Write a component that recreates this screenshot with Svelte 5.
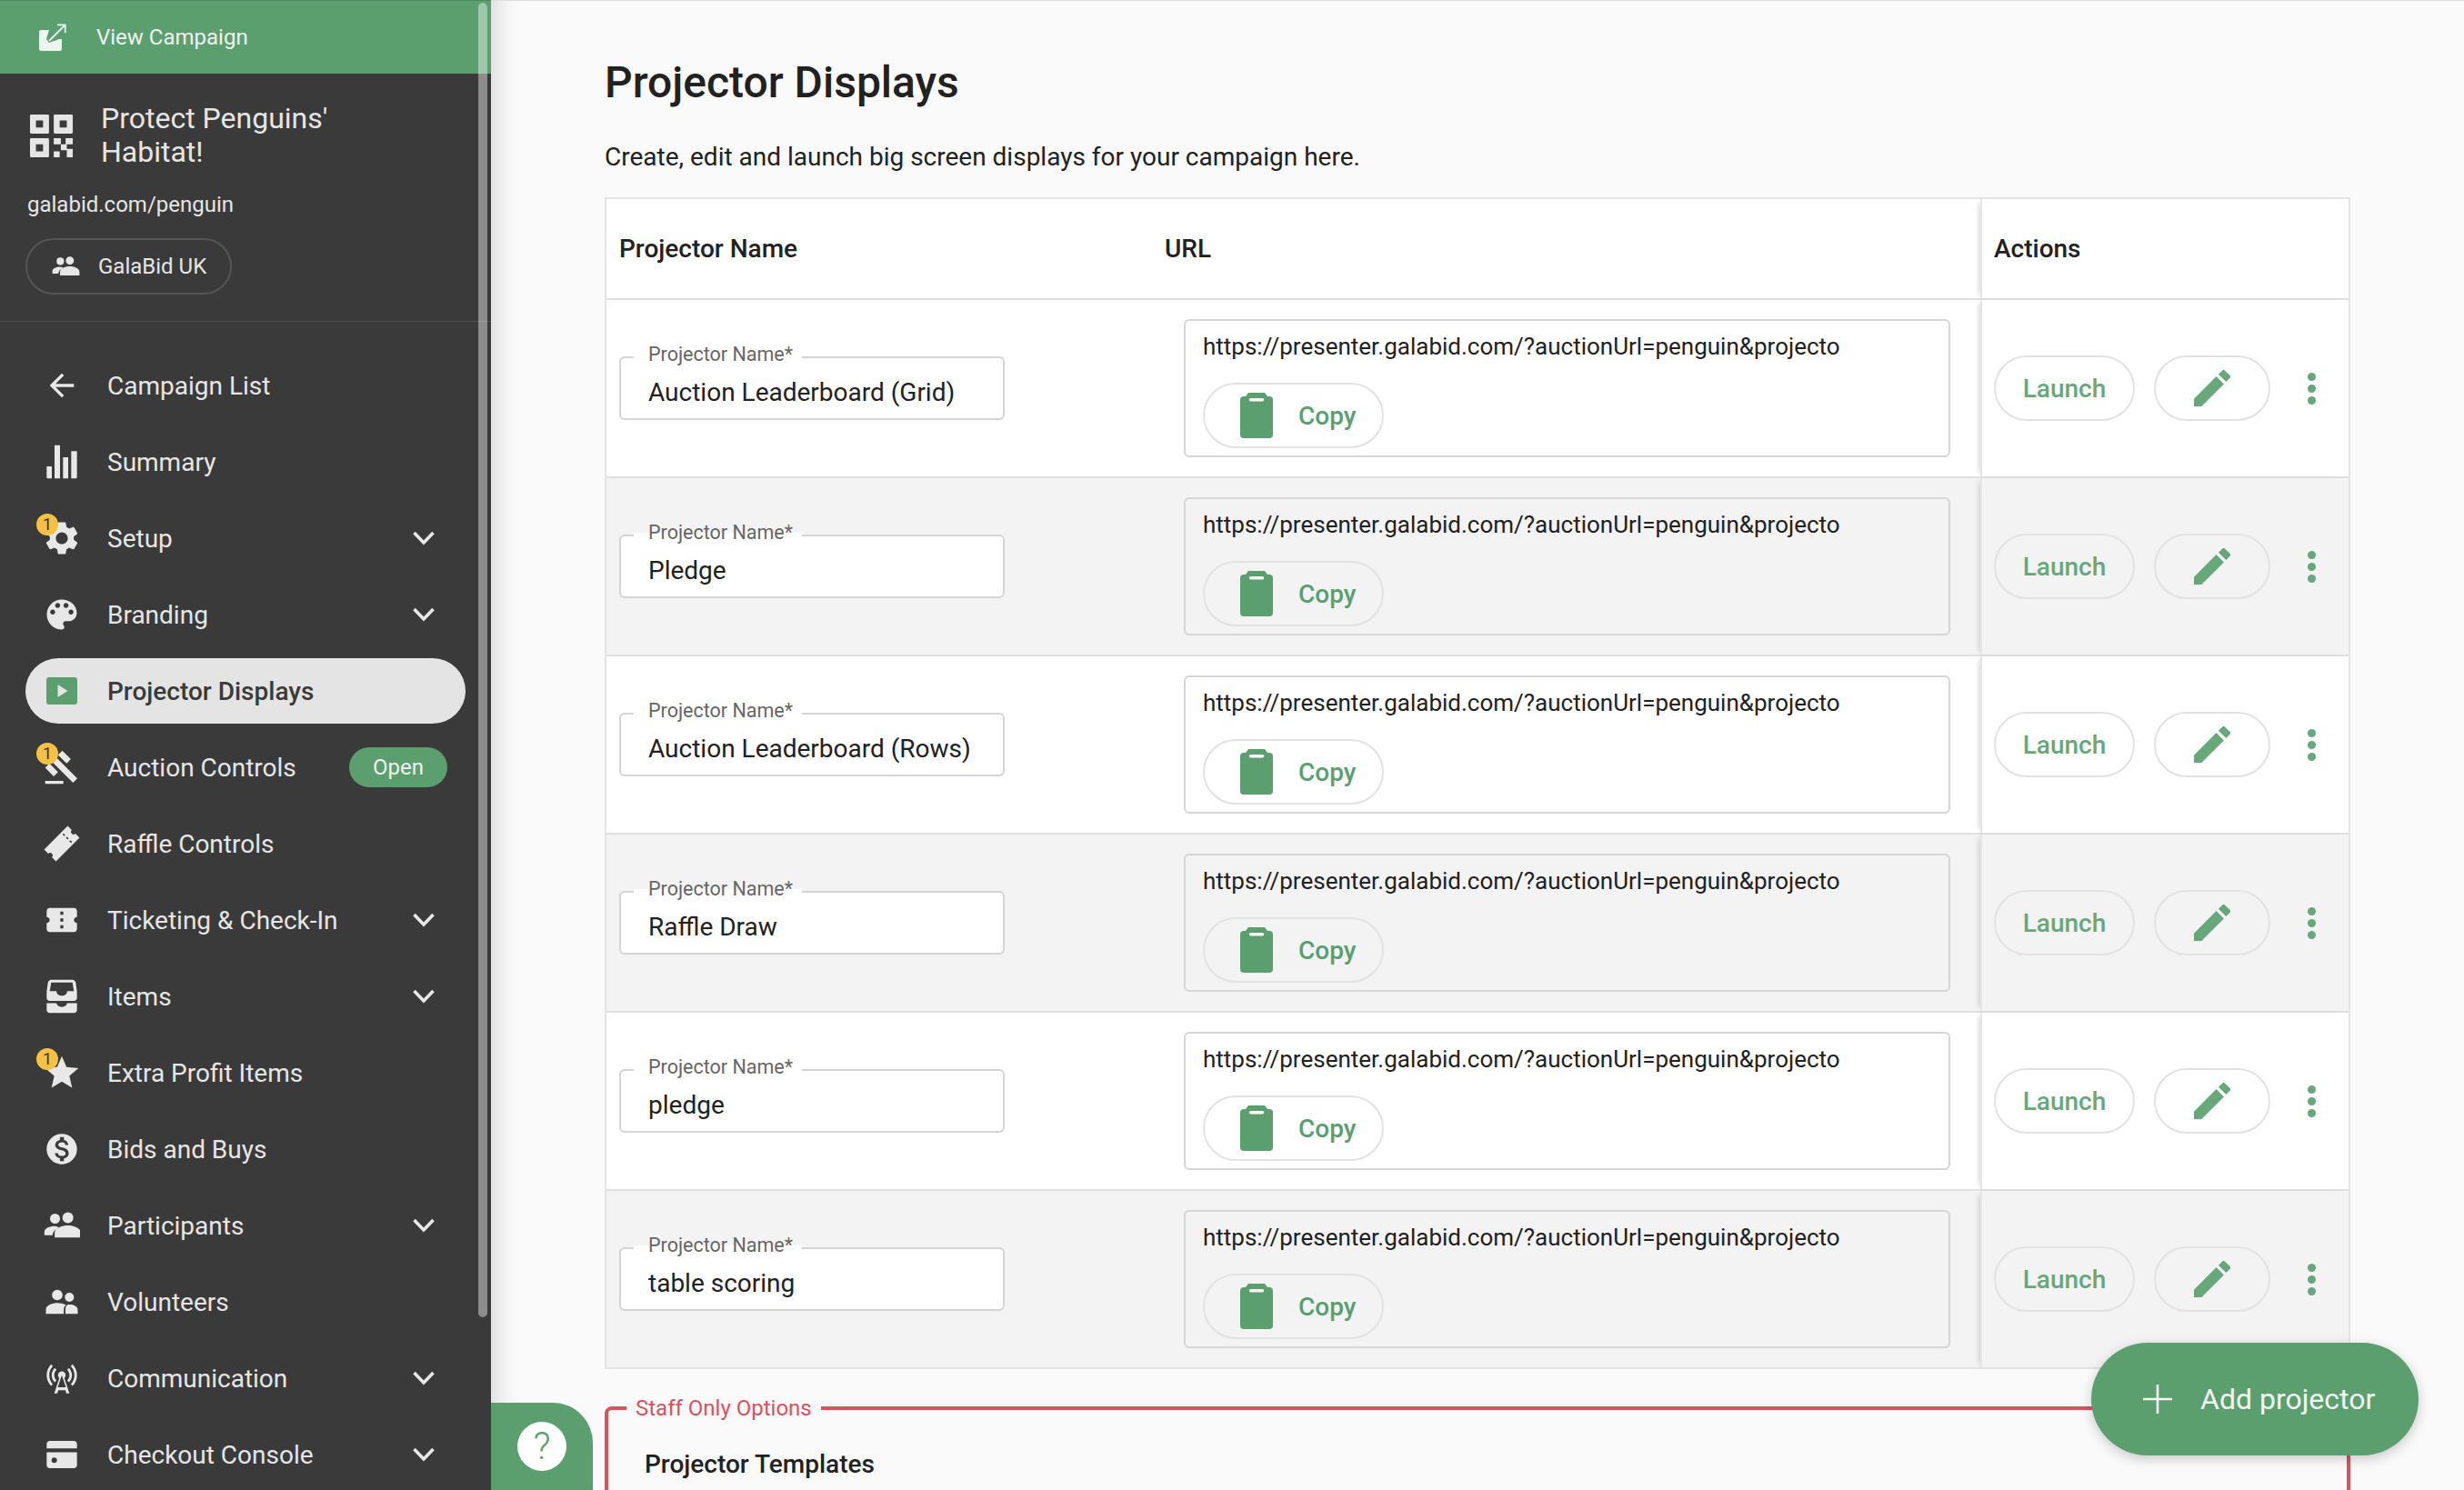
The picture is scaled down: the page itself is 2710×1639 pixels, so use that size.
<script>
  const ICONS = {
    back: 'M20 11H7.83l5.59-5.59L12 4l-8 8 8 8 1.41-1.41L7.83 13H20v-2z',
    summary: 'M2 15h3.400v8H3a1 1 0 0 1-1-1zM7.200 1h3.600v22H7.200zM12.800 9h3.400v14h-3.400zM18.200 5H22v17a1 1 0 0 1-1 1h-2.800z',
    gear: 'M19.14 12.94c.04-.3.06-.61.06-.94 0-.32-.02-.64-.07-.94l2.03-1.58c.18-.14.23-.41.12-.61l-1.92-3.32c-.12-.22-.37-.29-.59-.22l-2.39.96c-.5-.38-1.03-.7-1.62-.94l-.36-2.54c-.04-.24-.24-.41-.48-.41h-3.84c-.24 0-.43.17-.47.41l-.36 2.54c-.59.24-1.13.57-1.62.94l-2.39-.96c-.22-.08-.47 0-.59.22L2.74 8.87c-.12.21-.08.47.12.61l2.03 1.58c-.05.3-.09.63-.09.94s.02.64.07.94l-2.03 1.58c-.18.14-.23.41-.12.61l1.92 3.32c.12.22.37.29.59.22l2.39-.96c.5.38 1.03.7 1.62.94l.36 2.54c.05.24.24.41.48.41h3.84c.24 0 .44-.17.47-.41l.36-2.54c.59-.24 1.13-.56 1.62-.94l2.39.96c.22.08.47 0 .59-.22l1.92-3.32c.12-.22.07-.47-.12-.61l-2.01-1.58zM12 15.6c-1.98 0-3.6-1.62-3.6-3.6s1.62-3.6 3.6-3.6 3.6 1.62 3.6 3.6-1.62 3.6-3.6 3.6z',
    palette: 'M12 3c-4.97 0-9 4.03-9 9s4.03 9 9 9c.83 0 1.5-.67 1.5-1.5 0-.39-.15-.74-.39-1.01-.23-.26-.38-.61-.38-.99 0-.83.67-1.5 1.5-1.5H16c2.76 0 5-2.24 5-5 0-4.42-4.03-8-9-8zm-5.5 9c-.83 0-1.5-.67-1.5-1.5S5.67 9 6.5 9 8 9.67 8 10.5 7.33 12 6.500 12zm3-4C8.67 8 8 7.33 8 6.5S8.67 5 9.500 5s1.500.67 1.500 1.500S10.330 8 9.500 8zm5 0c-.83 0-1.500-.67-1.500-1.500S13.670 5 14.500 5s1.500.67 1.500 1.500S15.330 8 14.500 8zm3 4c-.83 0-1.500-.67-1.500-1.500S16.670 9 17.500 9s1.500.67 1.500 1.500-.67 1.500-1.500 1.500z',
    gavel: 'M1 21h12v2H1zM5.245 8.07l2.83-2.827 14.14 14.142-2.828 2.828zM12.317 1l5.657 5.656-2.83 2.83-5.654-5.66zM3.825 9.485l5.657 5.657-2.828 2.828-5.657-5.657z',
    raffle: 'M1 6.500h22v3.800a1.700 1.700 0 0 0 0 3.400v3.800H1v-3.800a1.700 1.700 0 0 0 0-3.400zM16.600 8v1.600h1V8zM16.600 11.200v1.600h1v-1.600zM16.600 14.400V16h1v-1.600z',
    ticket: 'M22 10V6c0-1.11-.9-2-2-2H4c-1.1 0-1.99.89-1.99 2v4c1.1 0 1.99.9 1.99 2s-.89 2-2 2v4c0 1.1.9 2 2 2h16c1.1 0 2-.9 2-2v-4c-1.1 0-2-.9-2-2s.9-2 2-2zm-9 7.5h-2v-2h2v2zm0-4.500h-2v-2h2v2zm0-4.500h-2v-2h2v2z',
    tray: 'M5 1h14c1 0 2 .8 2.200 2L22 9v4c0 1.100-.9 2-2 2H4c-1.100 0-2-.9-2-2V9l.8-6C3 1.800 4 1 5 1zm0 1.800L4 8.500h4.500c0 2 1.500 3 3.500 3s3.500-1 3.500-3H20l-1-5.700zM2 16.500h6.500c.3 1.500 1.700 2.500 3.500 2.500s3.200-1 3.500-2.500H22V21c0 1.100-.9 2-2 2H4c-1.100 0-2-.9-2-2z',
    star: 'M12 17.27L18.18 21l-1.64-7.03L22 9.24l-7.19-.61L12 2 9.19 8.63 2 9.24l5.46 4.73L5.82 21z',
    dollar: 'M12 2C6.48 2 2 6.48 2 12s4.48 10 10 10 10-4.48 10-10S17.52 2 12 2zm1.41 16.09V20h-2.67v-1.93c-1.71-.36-3.16-1.46-3.27-3.4h1.96c.1 1.05.82 1.87 2.65 1.87 1.96 0 2.4-.98 2.4-1.59 0-.83-.44-1.61-2.67-2.14-2.48-.6-4.18-1.62-4.18-3.67 0-1.72 1.39-2.84 3.11-3.21V4h2.67v1.95c1.86.45 2.79 1.86 2.85 3.39H14.300c-.05-1.11-.64-1.87-2.22-1.87-1.500 0-2.400.68-2.400 1.640 0 .84.65 1.390 2.670 1.910s4.180 1.390 4.180 3.910c-.01 1.830-1.380 2.830-3.120 3.160z',
    people: 'M16 10.500a3.600 3.600 0 1 0 0-7.200 3.600 3.600 0 0 0 0 7.200zM7.500 10.800a3.300 3.300 0 1 0 0-6.600 3.300 3.300 0 0 0 0 6.600zM7 12.500c-2.600 0-6.500 1.300-6.500 3.800V18.500h5.300c.2-2.400 1.700-4 4.400-5.200-1.100-.5-2.200-.8-3.200-.8zM16 12c-3.400 0-8.700 1.600-8.700 4.600V20h17.200v-3.400C24.500 13.600 19.400 12 16 12z',
    volunteers: 'M9 11a3.500 3.500 0 1 0 0-7 3.500 3.500 0 0 0 0 7zM17 12a3 3 0 1 0 0-6 3 3 0 0 0 0 6zM9 12.800c-2.900 0-7.500 1.400-7.500 4.200V20h11.800v-3c0-1.200.6-2.200 1.400-3-1.900-.8-4-1.200-5.700-1.200zM17.500 13.800c-.7 0-1.500.1-2.100.3-.7.700-1 1.800-1 2.900v3h8.100v-2.700c0-2.400-3-3.500-5-3.500z',
    tower: 'M7.3 14.7l1.2-1.200c-1-1-1.500-2.300-1.500-3.500s.5-2.500 1.500-3.500L7.300 5.300C6 6.600 5.300 8.300 5.300 10s.7 3.400 2 4.700zM19.100 2.900l-1.200 1.200c1.600 1.600 2.400 3.800 2.400 5.900 0 2.100-.8 4.300-2.400 5.900l1.200 1.200c2-2 2.900-4.500 2.900-7.100 0-2.600-1-5.100-2.900-7.100zM6.100 4.100 4.900 2.900C3 4.900 2 7.400 2 10s1 5.100 2.900 7.100l1.200-1.200c-1.600-1.600-2.400-3.800-2.400-5.900 0-2.100.8-4.300 2.400-5.900zm10.600 10.600c1.300-1.300 2-3 2-4.700-.1-1.700-.7-3.400-2-4.700l-1.200 1.200c1 1 1.500 2.300 1.500 3.500s-.5 2.500-1.500 3.500l1.200 1.200zM14.500 10c0-1.380-1.120-2.500-2.500-2.500S9.500 8.620 9.500 10c0 .76.34 1.420.87 1.880L7 22h2l.67-2h4.670l.66 2h2l-3.370-10.120c.53-.46.87-1.120.87-1.880zm-5.170 8L12 10l2.670 8H9.330z',
    card: 'M4 3h16c1.100 0 2 .9 2 2v3H2V5c0-1.100.9-2 2-2zM2 10.500h20V19c0 1.100-.9 2-2 2H4c-1.100 0-2-.9-2-2zM7 14a1.800 1.800 0 1 0 0 3.600A1.800 1.800 0 0 0 7 14z'
  };

  const nav = [
    { label: 'Campaign List', icon: 'back' },
    { label: 'Summary', icon: 'summary' },
    { label: 'Setup', icon: 'gear', badge: true, more: true, big: true },
    { label: 'Branding', icon: 'palette', more: true, big: true },
    { label: 'Projector Displays', icon: 'play', active: true },
    { label: 'Auction Controls', icon: 'gavel', badge: true, chip: 'Open' },
    { label: 'Raffle Controls', icon: 'raffle', tilt: true },
    { label: 'Ticketing & Check-In', icon: 'ticket', more: true },
    { label: 'Items', icon: 'tray', more: true },
    { label: 'Extra Profit Items', icon: 'star', badge: true, big: true },
    { label: 'Bids and Buys', icon: 'dollar' },
    { label: 'Participants', icon: 'people', more: true },
    { label: 'Volunteers', icon: 'volunteers' },
    { label: 'Communication', icon: 'tower', more: true },
    { label: 'Checkout Console', icon: 'card', more: true }
  ];

  const projectors = [
    'Auction Leaderboard (Grid)',
    'Pledge',
    'Auction Leaderboard (Rows)',
    'Raffle Draw',
    'pledge',
    'table scoring'
  ];

  const url = 'https://presenter.galabid.com/?auctionUrl=penguin&projecto';
</script>

<div class="page">
  <aside class="sidebar">
    <div class="view">
      <svg class="view-icon" viewBox="0 0 30 30">
        <rect y="7" width="25" height="23" rx="2" fill="#eef5f0"/>
        <path d="M13 0h17v17h-8L11 21 8 17z" fill="#5a9f6d"/>
        <path d="M11 19 28 2M20 1.300h8.700V10" fill="none" stroke="#eef5f0" stroke-width="1.800"/>
      </svg>
      <span>View Campaign</span>
    </div>
    <div class="campaign">
      <div class="campaign-title">
        <svg class="qr" viewBox="3 3 18 18"><path fill-rule="evenodd" d="M3.500 3h7a.5.5 0 0 1 .5.5v7a.5.5 0 0 1-.5.5h-7a.5.5 0 0 1-.5-.5v-7a.5.5 0 0 1 .5-.5zm2 2.500v3h3v-3zM13.500 3h7a.5.5 0 0 1 .5.5v7a.5.5 0 0 1-.5.5h-7a.5.5 0 0 1-.5-.5v-7a.5.5 0 0 1 .5-.5zm2 2.500v3h3v-3zM3.500 13h7a.5.5 0 0 1 .5.5v7a.5.5 0 0 1-.5.5h-7a.5.5 0 0 1-.5-.5v-7a.5.5 0 0 1 .5-.5zm2 2.500v3h3v-3zM13 13h3v2.500h-3zM18 13h3v2.500h-3zM16 15.500h2.500V18H16zM18.500 17.500H21V21h-2.500zM13 18.500h2.500V21H13z"/></svg>
        <h2>Protect Penguins' Habitat!</h2>
      </div>
      <div class="slug">galabid.com/penguin</div>
      <div class="org">
        <svg viewBox="0 0 25 24"><path d={ICONS.people}/></svg>
        <span>GalaBid UK</span>
      </div>
    </div>
    <nav>
      {#each nav as item}
        <div class="item" class:active={item.active}>
          <span class="icon">
            {#if item.icon === 'play'}
              <svg viewBox="0 0 34 30" class="play"><rect width="34" height="30" rx="3" fill="#5a9f6d"/><path d="M12.500 8v14l11-7z" fill="#e4e4e4"/></svg>
            {:else}
              <svg viewBox="0 0 24 24" class:tilt={item.tilt} class:big={item.big}><path fill-rule="evenodd" d={ICONS[item.icon]}/></svg>
            {/if}
            {#if item.badge}<b class="badge">1</b>{/if}
          </span>
          <span class="label">{item.label}</span>
          {#if item.chip}<span class="chip">{item.chip}</span>{/if}
          {#if item.more}
            <svg class="chev" viewBox="0 0 26 18"><path d="M2.500 3 13 14 23.500 3" fill="none" stroke="#e8e8e8" stroke-width="3.600"/></svg>
          {/if}
        </div>
      {/each}
    </nav>
    <div class="scrollbar"></div>
  </aside>

  <main>
    <h1>Projector Displays</h1>
    <p class="intro">Create, edit and launch big screen displays for your campaign here.</p>

    <div class="table">
      <div class="row head">
        <div class="name">Projector Name</div>
        <div class="link">URL</div>
        <div class="actions">Actions</div>
      </div>
      {#each projectors as name}
        <div class="row">
          <div class="name">
            <div class="field">
              <span class="legend">Projector Name*</span>
              <span>{name}</span>
            </div>
          </div>
          <div class="link">
            <div class="urlbox">
              <div class="url">{url}</div>
              <button class="copy">
                <svg viewBox="0 0 36 50"><path fill-rule="evenodd" d="M9 0h18l3 4h2a4 4 0 0 1 4 4v38a4 4 0 0 1-4 4H4a4 4 0 0 1-4-4V8a4 4 0 0 1 4-4h2zM11.500 6a1.700 1.700 0 0 0 0 3.500h13a1.700 1.700 0 0 0 0-3.500z" fill="#5a9f6d"/></svg>
                <span>Copy</span>
              </button>
            </div>
          </div>
          <div class="actions">
            <button class="pill launch">Launch</button>
            <button class="pill edit" aria-label="Edit">
              <svg viewBox="3 3 18 18"><path d="M3 17.250V21h3.750L17.810 9.940l-3.750-3.750L3 17.250zM20.710 7.040a1 1 0 0 0 0-1.410l-2.340-2.340a1 1 0 0 0-1.410 0l-1.830 1.830 3.750 3.750 1.830-1.830z"/></svg>
            </button>
            <span class="dots"><i></i><i></i><i></i></span>
          </div>
        </div>
      {/each}
    </div>

    <fieldset class="staff">
      <legend>Staff Only Options</legend>
      <h3>Projector Templates</h3>
    </fieldset>
  </main>

  <div class="help"><span>?</span></div>
  <button class="fab">
    <svg viewBox="0 0 32 32"><path d="M16 0v32M0 16h32" stroke="#f2f7f3" stroke-width="2.600"/></svg>
    <span>Add projector</span>
  </button>
</div>

<style>
  :global(body) {
    margin: 0;
    font-family: Roboto, "Liberation Sans", sans-serif;
    background: #fafafa;
  }
  .page {
    position: relative;
    display: flex;
    width: 100vw;
    height: 100vh;
    overflow: hidden;
  }
  .sidebar {
    position: relative;
    flex: 0 0 540px;
    background: #3a3a3a;
    color: #e6e6e6;
    overflow: hidden;
  }
  .view {
    display: flex;
    align-items: center;
    height: 80px;
    border-top: 1px solid #4b8a5e;
    background: #5a9f6d;
    color: #eef5f0;
    font-size: 24px;
  }
  .view-icon {
    width: 30px;
    height: 30px;
    margin-left: 43px;
    margin-right: 33px;
  }
  .campaign {
    height: 273px;
    padding: 0 28px;
    border-bottom: 1px solid #505050;
    box-sizing: border-box;
  }
  .campaign-title {
    display: flex;
    align-items: center;
    padding-top: 31px;
  }
  .qr {
    flex: none;
    width: 47px;
    height: 47px;
    margin-left: 5px;
    margin-right: 31px;
    fill: #e6e6e6;
  }
  h2 {
    margin: 0;
    width: 300px;
    font-size: 32px;
    font-weight: 400;
    line-height: 37px;
  }
  .slug {
    margin-top: 23px;
    margin-left: 2px;
    font-size: 24px;
    line-height: 32px;
  }
  .org {
    display: inline-flex;
    align-items: center;
    box-sizing: border-box;
    width: 227px;
    height: 62px;
    margin-top: 21px;
    padding-left: 27px;
    border: 2px solid #555;
    border-radius: 31px;
    font-size: 24px;
  }
  .org svg {
    width: 31px;
    height: 30px;
    margin-right: 20px;
    fill: #e6e6e6;
  }
  nav {
    padding: 34px 28px 0;
    display: flex;
    flex-direction: column;
    gap: 12px;
  }
  .item {
    display: flex;
    align-items: center;
    width: 484px;
    height: 72px;
    flex: none;
    border-radius: 36px;
    font-size: 28px;
    box-sizing: border-box;
  }
  .item.active {
    background: #e4e4e4;
    color: #3a3a3a;
    font-weight: 500;
  }
  .icon {
    position: relative;
    display: flex;
    flex: none;
    align-items: center;
    justify-content: center;
    width: 40px;
    height: 40px;
    margin-left: 20px;
    margin-right: 30px;
  }
  .icon svg {
    flex: none;
    width: 40px;
    height: 40px;
    fill: #e8e8e8;
  }
  .icon svg.big {
    width: 44px;
    height: 44px;
  }
  .icon svg.tilt {
    transform: rotate(-45deg);
  }
  .icon svg.play {
    width: 34px;
    height: 30px;
  }
  .badge {
    position: absolute;
    left: -8px;
    top: -7px;
    width: 24px;
    height: 24px;
    border-radius: 50%;
    background: #f4c141;
    color: #333;
    font-size: 18px;
    font-weight: 400;
    line-height: 24px;
    text-align: center;
  }
  .label {
    flex: 1;
  }
  .chip {
    width: 108px;
    height: 44px;
    margin-right: 20px;
    border-radius: 22px;
    background: #5a9f6d;
    color: #f0f6f2;
    font-size: 24px;
    line-height: 44px;
    text-align: center;
  }
  .chev {
    width: 26px;
    height: 18px;
    margin-right: 33px;
  }
  .scrollbar {
    position: absolute;
    left: 526px;
    top: 3px;
    width: 10px;
    height: 1446px;
    border-radius: 5px;
    background: rgba(255, 255, 255, 0.42);
  }
  main {
    flex: 1;
    min-width: 0;
    box-sizing: border-box;
    height: 100vh;
    padding: 0 125px 0 125px;
    border-top: 1px solid #dedede;
    box-shadow: inset 28px 0 26px -22px rgba(0, 0, 0, 0.14);
    overflow: hidden;
  }
  h1 {
    margin: 62px 0 0;
    font-size: 48px;
    font-weight: 500;
    line-height: 56px;
    color: #212121;
  }
  .intro {
    margin: 36px 0 0;
    font-size: 28px;
    line-height: 36px;
    color: #212121;
  }
  .table {
    margin-top: 26px;
    border: 2px solid #e4e4e4;
    background: #fff;
  }
  .row {
    display: flex;
    align-items: stretch;
    height: 196px;
    border-bottom: 2px solid #e0e0e0;
    box-sizing: border-box;
  }
  .row:last-child {
    border-bottom: 0;
    height: 194px;
  }
  .row:nth-child(odd) {
    background: #f3f3f3;
  }
  .row.head {
    height: 111px;
    align-items: center;
    background: #fff;
    font-size: 28px;
    font-weight: 500;
    color: #212121;
  }
  .name {
    display: flex;
    align-items: center;
    width: 614px;
    padding-left: 14px;
    box-sizing: border-box;
  }
  .link {
    display: flex;
    align-items: center;
    width: 897px;
    box-sizing: border-box;
    padding-left: 21px;
  }
  .head .link {
    padding-left: 0;
    font-weight: 500;
  }
  .actions {
    position: relative;
    display: flex;
    align-items: center;
    align-self: stretch;
    flex: 1;
    padding-left: 13px;
    background: inherit;
    box-shadow: -5px 0 6px -4px rgba(0, 0, 0, 0.18);
    border-left: 2px solid #e6e6e6;
  }
  .field {
    position: relative;
    display: flex;
    align-items: center;
    box-sizing: border-box;
    width: 424px;
    height: 70px;
    padding: 8px 0 0 30px;
    border: 2px solid #d4d4d4;
    border-radius: 6px;
    background: #fff;
    font-size: 28px;
    color: #212121;
  }
  .legend {
    position: absolute;
    left: 14px;
    top: -17px;
    padding: 0 10px 0 16px;
    background: linear-gradient(transparent 50%, #fff 50%);
    font-size: 21.500px;
    line-height: 26px;
    color: #666;
  }
  .row:nth-child(odd) .legend {
    background: linear-gradient(#f3f3f3 50%, #fff 50%);
  }
  .urlbox {
    box-sizing: border-box;
    width: 843px;
    height: 152px;
    padding: 13px 19px 0;
    border: 2px solid #d6d6d6;
    border-radius: 6px;
    overflow: hidden;
  }
  .url {
    font-size: 26px;
    line-height: 30px;
    color: #212121;
    white-space: nowrap;
  }
  button {
    font-family: inherit;
    background: transparent;
    padding: 0;
    cursor: pointer;
  }
  .copy {
    display: flex;
    align-items: center;
    box-sizing: border-box;
    width: 199px;
    height: 72px;
    margin-top: 25px;
    border: 2px solid #e2e2e2;
    border-radius: 36px;
  }
  .copy svg {
    width: 36px;
    height: 50px;
    margin-left: 39px;
    margin-right: 28px;
  }
  .copy span {
    font-size: 28px;
    font-weight: 500;
    color: #5a9f6d;
  }
  .pill {
    box-sizing: border-box;
    height: 72px;
    border: 2px solid #e2e2e2;
    border-radius: 36px;
  }
  .launch {
    width: 155px;
    font-size: 28px;
    font-weight: 500;
    color: #67a87a;
  }
  .edit {
    display: flex;
    align-items: center;
    justify-content: center;
    width: 128px;
    margin-left: 21px;
  }
  .edit svg {
    width: 40px;
    height: 40px;
    fill: #67a87a;
  }
  .dots {
    display: flex;
    flex-direction: column;
    gap: 4px;
    margin-left: 41px;
  }
  .dots i {
    width: 9px;
    height: 9px;
    border-radius: 50%;
    background: #67a87a;
  }
  .staff {
    margin: 29px 0 0;
    padding: 0 40px 40px;
    min-width: 0;
    border: 4px solid #d9535f;
    border-radius: 8px;
  }
  .staff legend {
    margin-left: -20px;
    padding: 0 10px;
    font-size: 24px;
    line-height: 28px;
    color: #d9535f;
  }
  h3 {
    margin: 31px 0 0;
    font-size: 28px;
    font-weight: 500;
    line-height: 33px;
    color: #212121;
  }
  .help {
    position: absolute;
    left: 540px;
    bottom: 0;
    display: flex;
    justify-content: center;
    width: 112px;
    height: 96px;
    padding-top: 21px;
    box-sizing: border-box;
    border-top-right-radius: 44px;
    background: #5a9f6d;
  }
  .help span {
    width: 54px;
    height: 54px;
    border-radius: 50%;
    background: #fff;
    color: #5a9f6d;
    font-size: 42px;
    font-weight: 300;
    line-height: 54px;
    text-align: center;
  }
  .fab {
    position: absolute;
    left: 2300px;
    top: 1477px;
    display: flex;
    align-items: center;
    width: 360px;
    height: 124px;
    padding-left: 57px;
    box-sizing: border-box;
    border: 0;
    border-radius: 62px;
    background: #5a9f6d;
    color: #f2f7f3;
    font-size: 32px;
    box-shadow: 0 4px 14px rgba(0, 0, 0, 0.2);
  }
  .fab svg {
    width: 32px;
    height: 32px;
    margin-right: 31px;
  }
</style>
